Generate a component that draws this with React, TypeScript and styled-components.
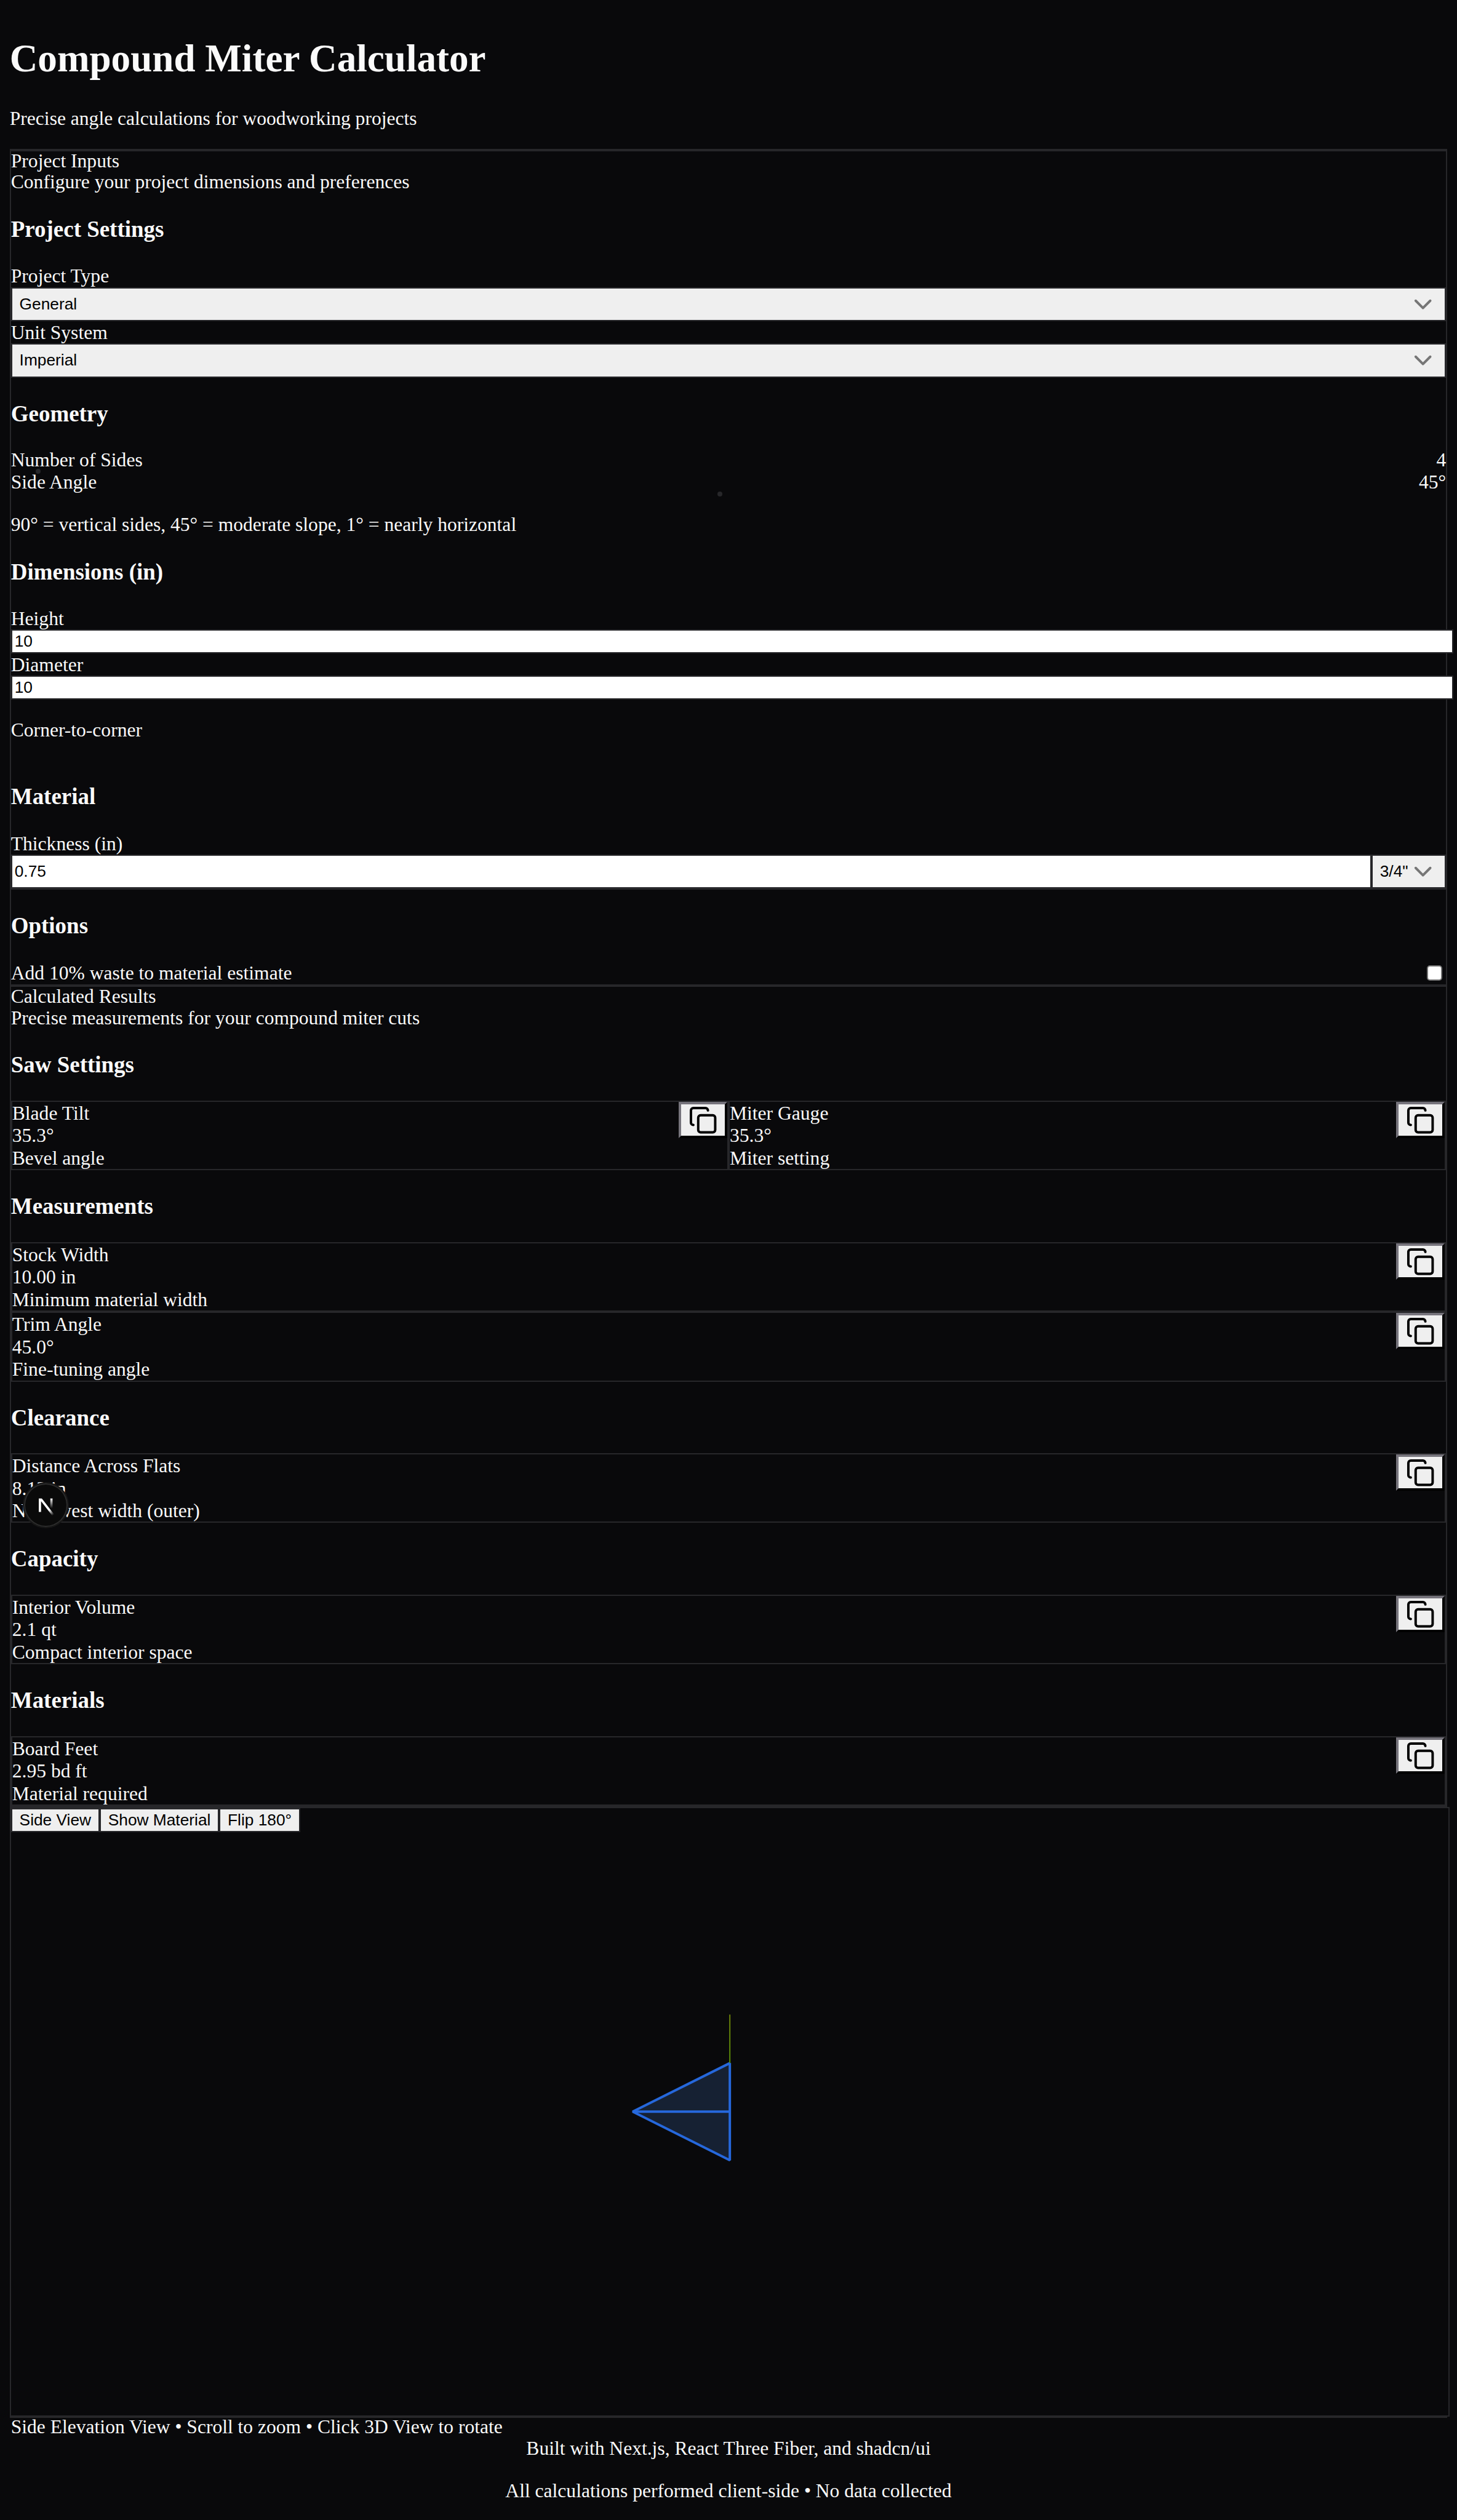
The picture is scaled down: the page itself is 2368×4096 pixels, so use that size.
import React from "react";
import styled, { createGlobalStyle } from "styled-components";
import { ChevronDown, Copy } from "lucide-react";

const K = 2368 / 2400;
const u = (n: number) => `${+(n * K).toFixed(3)}px`;

const color = {
  bg: "#09090b",
  fg: "#fafafa",
  line: "#27272a",
  control: "#efefef",
};
const serif = `"Liberation Serif", "Times New Roman", serif`;
const sans = `"Liberation Sans", Arial, sans-serif`;

const GlobalStyle = createGlobalStyle`
  *, *::before, *::after { box-sizing: border-box; }
  html, body { margin: 0; padding: 0; background: ${color.bg}; }
  body { overflow: hidden; }
`;

const Page = styled.div`
  position: relative;
  display: flow-root;
  width: ${u(2400)};
  height: ${u(4152)};
  padding: 0 ${u(16)};
  background: ${color.bg};
  color: ${color.fg};
  font-family: ${serif};
  font-size: ${u(32)};
  line-height: ${u(38.4)};
  font-variant-ligatures: common-ligatures;
  text-rendering: optimizeLegibility;
`;

const Header = styled.header`
  display: flow-root;
  height: ${u(247)};
  padding-top: ${u(59)};
  border-bottom: 2px solid ${color.line};
`;

const Title = styled.h1`
  margin: 0 0 ${u(43)};
  height: ${u(74)};
  font-size: ${u(64)};
  line-height: ${u(75)};
`;

const Lead = styled.p`
  margin: 0;
  height: ${u(37)};
`;

const Panel = styled.section<{ $h: number }>`
  display: flex;
  flex-direction: column;
  height: ${(p) => u(p.$h)};
  border: 2px solid ${color.line};
`;

const PanelTitle = styled.div`
  flex: none;
  height: ${u(32)};
  line-height: ${u(32)};
`;

const Line = styled.div<{ $h?: number }>`
  flex: none;
  height: ${(p) => u(p.$h ?? 37)};
`;

const Heading = styled.h3`
  flex: none;
  margin: ${u(37.5)} 0;
  height: ${u(43)};
  font-size: ${u(37.44)};
  line-height: ${u(44.2)};
`;

const Note = styled.p<{ $after?: number }>`
  flex: none;
  height: ${u(37)};
  margin: ${u(32)} 0 ${(p) => u(p.$after ?? 0)};
`;

const Between = styled.div<{ $h: number }>`
  flex: none;
  display: flex;
  justify-content: space-between;
  align-items: center;
  height: ${(p) => u(p.$h)};
`;

const Slider = styled.div<{ $x: number }>`
  flex: none;
  position: relative;
  height: 0;

  &::after {
    content: "";
    position: absolute;
    left: ${(p) => u(p.$x - 4)};
    top: ${u(-4)};
    width: ${u(8)};
    height: ${u(8)};
    border-radius: 50%;
    background: ${color.line};
  }
`;

const SelectButton = styled.button<{ $w?: number }>`
  flex: none;
  display: flex;
  align-items: center;
  justify-content: space-between;
  width: ${(p) => (p.$w ? u(p.$w) : "100%")};
  height: ${u(56)};
  margin: 0;
  padding: 0 ${u(12)} 0 ${u(12)};
  border: 2px solid ${color.line};
  border-radius: 0;
  background: ${color.control};
  color: #000;
  font-family: ${sans};
  font-size: ${u(26.667)};
  line-height: ${u(30)};

  svg {
    display: block;
    flex: none;
    width: ${u(48)};
    height: ${u(48)};
    color: #767676;
  }
`;

const Field = styled.input<{ $h: number; $w: number }>`
  flex: none;
  display: block;
  width: ${(p) => u(p.$w)};
  height: ${(p) => u(p.$h)};
  margin: 0;
  padding: 0 ${u(4)};
  border: 2px solid ${color.line};
  border-radius: 0;
  outline: none;
  background: #fff;
  color: #000;
  font-family: ${sans};
  font-size: ${u(26.667)};
`;

const ThicknessRow = styled.div`
  flex: none;
  display: flex;
  height: ${u(58)};
  border-bottom: 2px solid ${color.line};
`;

const Checkbox = styled.span`
  width: ${u(26)};
  height: ${u(26)};
  margin-right: ${u(6)};
  border: 2px solid #767676;
  border-radius: ${u(5)};
  background: #fff;
`;

const Pair = styled.div`
  flex: none;
  display: grid;
  grid-template-columns: 1fr 1fr;
`;

const Card = styled.div`
  flex: none;
  display: flex;
  justify-content: space-between;
  align-items: flex-start;
  height: ${u(115)};
  border: 2px solid ${color.line};
`;

const CopyButton = styled.button`
  display: flex;
  align-items: center;
  justify-content: center;
  width: ${u(80)};
  height: ${u(60)};
  margin: 0;
  padding: 0;
  border: 4px solid;
  border-color: #76747c #000 #000 #76747c;
  border-radius: 0;
  background: ${color.control};
  color: #000;

  svg {
    display: block;
    flex: none;
    width: ${u(48)};
    height: ${u(48)};
  }
`;

const Viewer = styled.section`
  position: relative;
  width: ${u(2372)};
  height: ${u(1004)};
  border: 2px solid ${color.line};
`;

const Toolbar = styled.div`
  position: absolute;
  z-index: 1;
  top: 0;
  left: 0;
  display: flex;
`;

const ToolButton = styled.button`
  height: ${u(39)};
  margin: 0;
  padding: 0 ${u(12)};
  border: 2px solid ${color.line};
  border-radius: 0;
  background: ${color.control};
  color: #000;
  font-family: ${sans};
  font-size: ${u(26.667)};
  line-height: ${u(35)};
  white-space: nowrap;
`;

const Scene = styled.svg`
  display: block;
  width: 100%;
  height: 100%;
`;

const Caption = styled.div`
  width: ${u(2368)};
  height: ${u(34)};
  padding-left: ${u(2)};
  border-top: 2px solid ${color.line};
  line-height: ${u(29.5)};
`;

const Footer = styled.footer`
  text-align: center;

  p {
    margin: 0 0 ${u(32)};
    height: ${u(37)};
  }
`;

const Badge = styled.div`
  position: absolute;
  left: ${u(40)};
  top: ${u(2444)};
  width: ${u(72)};
  height: ${u(72)};
  border-radius: 50%;
  background: #0a0a0a;
  box-shadow: 0 0 0 2px #171717, inset 0 0 0 2px #2c2c2c;

  svg {
    position: absolute;
    left: ${u(-4)};
    top: ${u(-4)};
    width: ${u(80)};
    height: ${u(80)};
  }
`;

type ResultProps = { label: string; value: string; hint: string };

const Result = ({ label, value, hint }: ResultProps) => (
  <Card>
    <div>
      <Line>{label}</Line>
      <Line>{value}</Line>
      <Line>{hint}</Line>
    </div>
    <CopyButton aria-label={`Copy ${label}`}>
      <Copy strokeWidth={2} />
    </CopyButton>
  </Card>
);

const Select = ({ value, w }: { value: string; w?: number }) => (
  <SelectButton $w={w}>
    <span>{value}</span>
    <ChevronDown strokeWidth={2} />
  </SelectButton>
);

const SideElevation = () => (
  <Scene viewBox="18 2979 2368 1000" preserveAspectRatio="none">
    <defs>
      <linearGradient id="axis" gradientUnits="userSpaceOnUse" x1="0" y1="3319" x2="0" y2="3399">
        <stop offset="0" stopColor="#6c8109" />
        <stop offset="1" stopColor="#588c07" />
      </linearGradient>
    </defs>
    <path
      d="M1202 3399 L1042 3479 L1202 3559 Z"
      fill="#162133"
      stroke="#2668dc"
      strokeWidth="4"
      strokeLinejoin="bevel"
    />
    <path d="M1042 3479 H1202" stroke="#2668dc" strokeWidth="4" />
    <rect x="1201" y="3319" width="2" height="80" fill="url(#axis)" />
  </Scene>
);

const NextMark = () => (
  <svg viewBox="0 0 40 40" fill="none">
    <defs>
      <linearGradient id="diag" x1="9.95555" y1="11.1226" x2="15.4778" y2="17.9671" gradientUnits="userSpaceOnUse">
        <stop stopColor="white" />
        <stop offset="0.604072" stopColor="white" stopOpacity="0" />
        <stop offset="1" stopColor="white" stopOpacity="0" />
      </linearGradient>
      <linearGradient id="stem" x1="11.8222" y1="1.40039" x2="11.791" y2="9.62542" gradientUnits="userSpaceOnUse">
        <stop stopColor="white" />
        <stop offset="1" stopColor="white" stopOpacity="0" />
      </linearGradient>
      <mask id="cut" maskUnits="userSpaceOnUse" x="0" y="0" width="20" height="20">
        <rect width="20" height="20" fill="white" />
        <rect width="5" height="1.5" fill="black" />
      </mask>
    </defs>
    <g transform="translate(12.3 13)">
      <path d="M13.3 15.2 L2.34 1 V12.6" stroke="url(#diag)" strokeWidth="1.86" mask="url(#cut)" />
      <path d="M11.825 1.5 V13.1" stroke="url(#stem)" strokeWidth="1.86" />
    </g>
  </svg>
);

export default function App() {
  return (
    <>
      <GlobalStyle />
      <Page>
        <Header>
          <Title>Compound Miter Calculator</Title>
          <Lead>Precise angle calculations for woodworking projects</Lead>
        </Header>

        <Panel $h={1377}>
          <PanelTitle>Project Inputs</PanelTitle>
          <Line>Configure your project dimensions and preferences</Line>

          <Heading>Project Settings</Heading>
          <Line>Project Type</Line>
          <Select value="General" />
          <Line>Unit System</Line>
          <Select value="Imperial" />

          <Heading>Geometry</Heading>
          <Between $h={36.5}>
            <span>Number of Sides</span>
            <span>4</span>
          </Between>
          <Slider $x={45} />
          <Between $h={37}>
            <span>Side Angle</span>
            <span>45°</span>
          </Between>
          <Slider $x={1168} />
          <Note>90° = vertical sides, 45° = moderate slope, 1° = nearly horizontal</Note>

          <Heading>Dimensions (in)</Heading>
          <Line $h={36.5}>Height</Line>
          <Field $w={2376} $h={39} value="10" readOnly />
          <Line>Diameter</Line>
          <Field $w={2376} $h={39} value="10" readOnly />
          <Note $after={32}>Corner-to-corner</Note>

          <Heading>Material</Heading>
          <Line>Thickness (in)</Line>
          <ThicknessRow>
            <Field $w={2241} $h={56} value="0.75" readOnly />
            <Select value={'3/4"'} w={123} />
          </ThicknessRow>

          <Heading>Options</Heading>
          <Between $h={38}>
            <span>Add 10% waste to material estimate</span>
            <Checkbox role="checkbox" aria-checked="false" />
          </Between>
        </Panel>

        <Panel $h={1353}>
          <PanelTitle>Calculated Results</PanelTitle>
          <Line>Precise measurements for your compound miter cuts</Line>

          <Heading>Saw Settings</Heading>
          <Pair>
            <Result label="Blade Tilt" value="35.3°" hint="Bevel angle" />
            <Result label="Miter Gauge" value="35.3°" hint="Miter setting" />
          </Pair>

          <Heading>Measurements</Heading>
          <Result label="Stock Width" value="10.00 in" hint="Minimum material width" />
          <Result label="Trim Angle" value="45.0°" hint="Fine-tuning angle" />

          <Heading>Clearance</Heading>
          <Result label="Distance Across Flats" value="8.12 in" hint="Narrowest width (outer)" />

          <Heading>Capacity</Heading>
          <Result label="Interior Volume" value="2.1 qt" hint="Compact interior space" />

          <Heading>Materials</Heading>
          <Result label="Board Feet" value="2.95 bd ft" hint="Material required" />
        </Panel>

        <Viewer>
          <Toolbar>
            <ToolButton>Side View</ToolButton>
            <ToolButton>Show Material</ToolButton>
            <ToolButton>Flip 180°</ToolButton>
          </Toolbar>
          <SideElevation />
        </Viewer>

        <Caption>Side Elevation View • Scroll to zoom • Click 3D View to rotate</Caption>
        <Footer>
          <p>Built with Next.js, React Three Fiber, and shadcn/ui</p>
          <p>All calculations performed client-side • No data collected</p>
        </Footer>

        <Badge>
          <NextMark />
        </Badge>
      </Page>
    </>
  );
}
